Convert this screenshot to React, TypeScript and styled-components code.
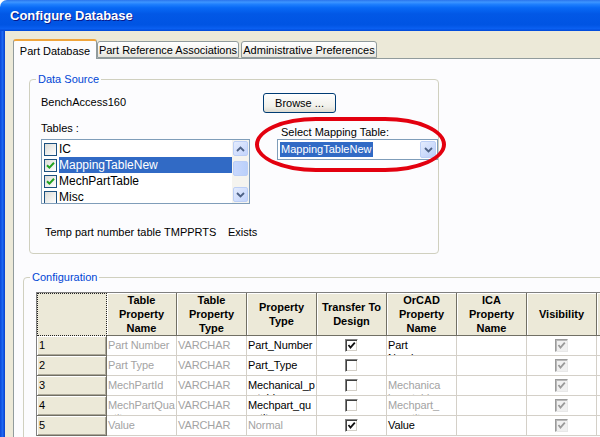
import React from 'react'
import styled, { createGlobalStyle } from 'styled-components'

const GlobalStyle = createGlobalStyle`
    html, body {
        margin: 0;
        padding: 0;
        background: #ffffff;
        overflow: hidden;
    }
    body {
        font-family: "Liberation Sans", Arial, sans-serif;
        font-size: 11px;
        color: #000;
    }
`

interface RowData {
    n: string
    name: string
    prop: string
    propMuted?: boolean
    transfer: boolean
    orcad: string
    orcadMuted?: boolean
}

const rows: RowData[] = [
    { n: '1', name: 'Part Number', prop: 'Part_Number', transfer: true, orcad: 'Part\nNumber' },
    { n: '2', name: 'Part Type', prop: 'Part_Type', transfer: false, orcad: '' },
    { n: '3', name: 'MechPartId', prop: 'Mechanical_part_id', transfer: false, orcad: 'Mechanica\nl_part_id', orcadMuted: true },
    { n: '4', name: 'MechPartQuantity', prop: 'Mechpart_quantity', transfer: false, orcad: 'Mechpart_\nquantity', orcadMuted: true },
    { n: '5', name: 'Value', prop: 'Normal', propMuted: true, transfer: true, orcad: 'Value' },
]

const headers = [
    'Table Property Name',
    'Table Property Type',
    'Property Type',
    'Transfer To Design',
    'OrCAD Property Name',
    'ICA Property Name',
    'Visibility',
    '',
]

const tables = [
    { label: 'IC', checked: false },
    { label: 'MappingTableNew', checked: true, selected: true },
    { label: 'MechPartTable', checked: true },
    { label: 'Misc', checked: false },
]

const ConfigureDatabase: React.FC = () => {
    return (
        <Window>
            <GlobalStyle />
            <TitleBar>Configure Database</TitleBar>
            <Frame>
                <FrameEdge />
                <Body>
                    <Tabs>
                        <Tab active w={84}>Part Database</Tab>
                        <Tab w={142}>Part Reference Associations</Tab>
                        <Tab w={136} gap={2}>Administrative Preferences</Tab>
                    </Tabs>
                    <Panel>
                        <DataSource>
                            <Legend>Data Source</Legend>
                            <SourceInner>
                                <LeftCol>
                                    <Line top={9}>BenchAccess160</Line>
                                    <Line top={12}>Tables :</Line>
                                    <ListBox>
                                        <ListItems>
                                            {tables.map(t => (
                                                <ListItem key={t.label}>
                                                    <XpCheck>
                                                        {t.checked && (
                                                            <svg width="9" height="9" viewBox="0 0 9 9">
                                                                <path d="M1 4.2 L3.4 6.6 L8 1.8" stroke="#21A121" strokeWidth="2" fill="none" />
                                                            </svg>
                                                        )}
                                                    </XpCheck>
                                                    <ItemText selected={t.selected}>{t.label}</ItemText>
                                                </ListItem>
                                            ))}
                                        </ListItems>
                                        <ScrollBar>
                                            <ScrollBtn>
                                                <svg width="9" height="6" viewBox="0 0 9 6">
                                                    <path d="M1 5 L4.5 1.5 L8 5" stroke="#4D6185" strokeWidth="1.8" fill="none" />
                                                </svg>
                                            </ScrollBtn>
                                            <Thumb />
                                            <ScrollBtn down>
                                                <svg width="9" height="6" viewBox="0 0 9 6">
                                                    <path d="M1 1 L4.5 4.5 L8 1" stroke="#4D6185" strokeWidth="1.8" fill="none" />
                                                </svg>
                                            </ScrollBtn>
                                        </ScrollBar>
                                    </ListBox>
                                    <TempRow>
                                        <TempName>Temp part number table TMPPRTS</TempName>
                                        <span>Exists</span>
                                    </TempRow>
                                </LeftCol>
                                <RightCol>
                                    <Button>Browse ...</Button>
                                    <MapBox>
                                        <MapLabel>Select Mapping Table:</MapLabel>
                                        <Combo>
                                            <ComboText>MappingTableNew</ComboText>
                                            <ComboBtn>
                                                <svg width="9" height="6" viewBox="0 0 9 6">
                                                    <path d="M1 1 L4.5 4.5 L8 1" stroke="#4D6185" strokeWidth="1.8" fill="none" />
                                                </svg>
                                            </ComboBtn>
                                        </Combo>
                                        <RedMark />
                                    </MapBox>
                                </RightCol>
                            </SourceInner>
                        </DataSource>

                        <Configuration>
                            <Legend>Configuration</Legend>
                            <ConfigInner>
                                <Grid>
                                    <Corner />
                                    {headers.map((h, i) => (
                                        <HeadCell key={i}>{h}</HeadCell>
                                    ))}
                                    {rows.map(r => (
                                        <React.Fragment key={r.n}>
                                            <RowHead>{r.n}</RowHead>
                                            <Cell muted>{r.name}</Cell>
                                            <Cell muted>VARCHAR</Cell>
                                            <Cell muted={r.propMuted}>{r.prop}</Cell>
                                            <CheckCell>
                                                <GridCheck>
                                                    {r.transfer && (
                                                        <svg width="9" height="9" viewBox="0 0 9 9">
                                                            <path d="M1.5 4 L3.5 6.5 L7.8 1.6" stroke="#111" strokeWidth="1.8" fill="none" />
                                                        </svg>
                                                    )}
                                                </GridCheck>
                                            </CheckCell>
                                            <Cell muted={r.orcadMuted}>{r.orcad}</Cell>
                                            <Cell />
                                            <CheckCell>
                                                <GridCheck disabled>
                                                    <svg width="9" height="9" viewBox="0 0 9 9">
                                                        <path d="M1.5 4 L3.5 6.5 L7.8 1.6" stroke="#9A9A9A" strokeWidth="1.8" fill="none" />
                                                    </svg>
                                                </GridCheck>
                                            </CheckCell>
                                            <Cell />
                                        </React.Fragment>
                                    ))}
                                </Grid>
                            </ConfigInner>
                        </Configuration>
                    </Panel>
                </Body>
            </Frame>
        </Window>
    )
}

const Window = styled.div`
    width: 600px;
    height: 437px;
    display: flex;
    flex-direction: column;
    overflow: hidden;
`
const TitleBar = styled.div`
    height: 31px;
    flex-shrink: 0;
    display: flex;
    align-items: center;
    padding-left: 10px;
    border-top-left-radius: 7px;
    color: #fff;
    font-family: "Liberation Sans", Arial, sans-serif;
    font-weight: bold;
    font-size: 13px;
    text-shadow: 1px 1px 0 #0a1a8a;
    background: linear-gradient(to bottom, #2a74ec 0%, #3d95ff 7%, #1f7ffd 14%, #0869f5 25%, #0258e6 45%, #0054e3 80%, #0a5ff0 92%, #0048d8 100%);
`
const Frame = styled.div`
    flex: 1;
    display: flex;
    min-height: 0;
`
const FrameEdge = styled.div`
    width: 5px;
    flex-shrink: 0;
    background: linear-gradient(to right, #0a48d8, #1c68f2 50%, #0640cc);
`
const Body = styled.div`
    flex: 1;
    display: flex;
    flex-direction: column;
    background: #ece9d8;
    padding: 8px 0 0 8px;
    min-width: 0;
`
const Tabs = styled.div`
    display: flex;
    align-items: flex-end;
    height: 19px;
    flex-shrink: 0;
`
const Tab = styled.div<{ active?: boolean; w: number; gap?: number }>`
    box-sizing: border-box;
    width: ${p => p.w}px;
    height: ${p => (p.active ? 20 : 17)}px;
    margin-left: ${p => p.gap || 0}px;
    margin-bottom: ${p => (p.active ? -1 : 0)}px;
    position: relative;
    z-index: ${p => (p.active ? 2 : 0)};
    display: flex;
    align-items: center;
    justify-content: center;
    padding-top: ${p => (p.active ? 1 : 0)}px;
    border: 1px solid #919b9c;
    border-bottom: ${p => (p.active ? 'none' : '1px solid #919b9c')};
    border-top: ${p => (p.active ? '2px solid #f0a53c' : '1px solid #919b9c')};
    border-radius: 3px 3px 0 0;
    background: ${p => (p.active ? '#fcfcfe' : 'linear-gradient(to bottom, #ffffff, #f3f3ef 60%, #e4e3dc)')};
    white-space: nowrap;
`
const Panel = styled.div`
    flex: 1;
    background: #fcfcfe;
    border-top: 1px solid #919b9c;
    border-left: 1px solid #919b9c;
    padding: 13px 0 0 15px;
    position: relative;
    z-index: 1;
    min-height: 0;
`
const DataSource = styled.fieldset`
    box-sizing: border-box;
    width: 410px;
    height: 182px;
    margin: 0;
    padding: 0;
    border: 1px solid #d0d0bf;
    border-radius: 4px;
    min-width: 0;
`
const Configuration = styled.fieldset`
    box-sizing: border-box;
    width: 700px;
    height: 220px;
    margin: 16px 0 0 -6px;
    padding: 0;
    border: 1px solid #d0d0bf;
    border-radius: 4px;
    min-width: 0;
`
const Legend = styled.legend`
    color: #0046d5;
    padding: 0 2px;
    margin-left: 6px;
    line-height: 14px;
    font-size: 11px;
`
const SourceInner = styled.div`
    display: flex;
    gap: 13px;
    padding-left: 11px;
`
const LeftCol = styled.div`
    width: 209px;
    display: flex;
    flex-direction: column;
`
const Line = styled.div<{ top: number }>`
    margin-top: ${p => p.top}px;
    line-height: 14px;
`
const ListBox = styled.div`
    box-sizing: border-box;
    margin-top: 4px;
    height: 65px;
    border: 1px solid #7f9db9;
    background: #fff;
    display: flex;
    overflow: hidden;
`
const ListItems = styled.div`
    flex: 1;
    padding-top: 1px;
    overflow: hidden;
`
const ListItem = styled.div`
    height: 16px;
    display: flex;
    align-items: center;
    padding-left: 2px;
    gap: 2px;
`
const XpCheck = styled.span`
    box-sizing: border-box;
    width: 13px;
    height: 13px;
    border: 1px solid #1c5180;
    background: linear-gradient(135deg, #dcdcd7, #ffffff);
    display: flex;
    align-items: center;
    justify-content: center;
    flex-shrink: 0;
`
const ItemText = styled.span<{ selected?: boolean }>`
    flex: 1;
    height: 16px;
    line-height: 16px;
    font-size: 12px;
    background: ${p => (p.selected ? '#316ac5' : 'transparent')};
    color: ${p => (p.selected ? '#fff' : '#000')};
`
const ScrollBar = styled.div`
    width: 17px;
    flex-shrink: 0;
    display: flex;
    flex-direction: column;
    background: #f5f4ef;
    padding: 1px 0 1px 1px;
    box-sizing: border-box;
`
const ScrollBtn = styled.div<{ down?: boolean }>`
    box-sizing: border-box;
    height: 15px;
    width: 15px;
    margin-top: ${p => (p.down ? 'auto' : '0')};
    border: 1px solid #bccff6;
    border-radius: 2px;
    background: linear-gradient(135deg, #e4ecfd, #c3d4fc);
    display: flex;
    align-items: center;
    justify-content: center;
`
const Thumb = styled.div`
    box-sizing: border-box;
    height: 15px;
    width: 15px;
    margin-top: 5px;
    border: 1px solid #bccff6;
    border-radius: 2px;
    background: linear-gradient(to right, #c8d8fd, #bad0fa);
`
const TempRow = styled.div`
    margin-top: 21px;
    padding-left: 4px;
    display: flex;
    line-height: 14px;
    white-space: nowrap;
`
const TempName = styled.span`
    width: 183px;
    flex-shrink: 0;
`
const RightCol = styled.div`
    width: 175px;
    display: flex;
    flex-direction: column;
`
const Button = styled.div`
    box-sizing: border-box;
    margin-top: 7px;
    width: 73px;
    height: 20px;
    border: 1px solid #003c74;
    border-radius: 3px;
    background: linear-gradient(to bottom, #ffffff, #f0f0ea 70%, #dcdad0);
    display: flex;
    align-items: center;
    justify-content: center;
`
const MapBox = styled.div`
    position: relative;
    margin-top: 13px;
`
const MapLabel = styled.div`
    margin-left: 18px;
    line-height: 13px;
`
const Combo = styled.div`
    box-sizing: border-box;
    margin-left: 14px;
    width: 161px;
    height: 21px;
    border: 1px solid #7f9db9;
    background: #fff;
    display: flex;
    align-items: center;
`
const ComboText = styled.span`
    margin-left: 2px;
    padding: 0 1px;
    line-height: 15px;
    background: #316ac5;
    color: #fff;
`
const ComboBtn = styled.div`
    box-sizing: border-box;
    margin-left: auto;
    margin-right: 1px;
    width: 16px;
    height: 17px;
    border: 1px solid #bccff6;
    border-radius: 2px;
    background: linear-gradient(135deg, #e4ecfd, #b9cdf9);
    display: flex;
    align-items: center;
    justify-content: center;
`
const RedMark = styled.div`
    position: absolute;
    left: -8px;
    top: -9px;
    width: 191px;
    height: 55px;
    box-sizing: border-box;
    border: 4px solid #e3000f;
    border-radius: 62px / 28px;
    pointer-events: none;
`
const ConfigInner = styled.div`
    padding: 8px 0 0 12px;
`
const Grid = styled.div`
    display: grid;
    grid-template-columns: repeat(9, 70px);
    grid-template-rows: 43px repeat(5, 20px);
    border-top: 1px solid #808080;
    border-left: 1px solid #808080;
    width: max-content;
`
const Corner = styled.div`
    box-sizing: border-box;
    background: #ece9d8;
    border: 1px dotted #222;
`
const HeadCell = styled.div`
    box-sizing: border-box;
    background: #ece9d8;
    border-right: 1px solid #716f64;
    border-bottom: 1px solid #716f64;
    box-shadow: inset 1px 1px 0 #fff;
    display: flex;
    align-items: center;
    justify-content: center;
    text-align: center;
    font-weight: bold;
    line-height: 14px;
    padding: 0 2px;
`
const RowHead = styled.div`
    box-sizing: border-box;
    background: #ece9d8;
    border-right: 1px solid #716f64;
    border-bottom: 1px solid #716f64;
    box-shadow: inset 1px 1px 0 #fff, inset -1px -1px 0 #aca899;
    padding: 3px 0 0 2px;
    line-height: 13px;
`
const Cell = styled.div<{ muted?: boolean }>`
    box-sizing: border-box;
    background: #fff;
    border-right: 1px solid #d4d0c8;
    border-bottom: 1px solid #d4d0c8;
    overflow: hidden;
    padding: 3px 0 0 1px;
    line-height: 13px;
    letter-spacing: -0.1px;
    white-space: pre-line;
    word-break: break-all;
    color: ${p => (p.muted ? '#a3a3a3' : '#000')};
`
const CheckCell = styled.div`
    box-sizing: border-box;
    background: #fff;
    border-right: 1px solid #d4d0c8;
    border-bottom: 1px solid #d4d0c8;
    display: flex;
    align-items: center;
    justify-content: center;
`
const GridCheck = styled.span<{ disabled?: boolean }>`
    box-sizing: border-box;
    width: 13px;
    height: 13px;
    border: 1px solid;
    border-color: ${p => (p.disabled ? '#9a9a9a #e8e8e8 #e8e8e8 #9a9a9a' : '#808080 #ffffff #ffffff #808080')};
    box-shadow: ${p => (p.disabled ? 'inset 1px 1px 0 #b8b8b8' : 'inset 1px 1px 0 #404040, inset -1px -1px 0 #d4d0c8')};
    background: ${p => (p.disabled ? '#f0f0f0' : '#fff')};
    display: flex;
    align-items: center;
    justify-content: center;
`

export default ConfigureDatabase
